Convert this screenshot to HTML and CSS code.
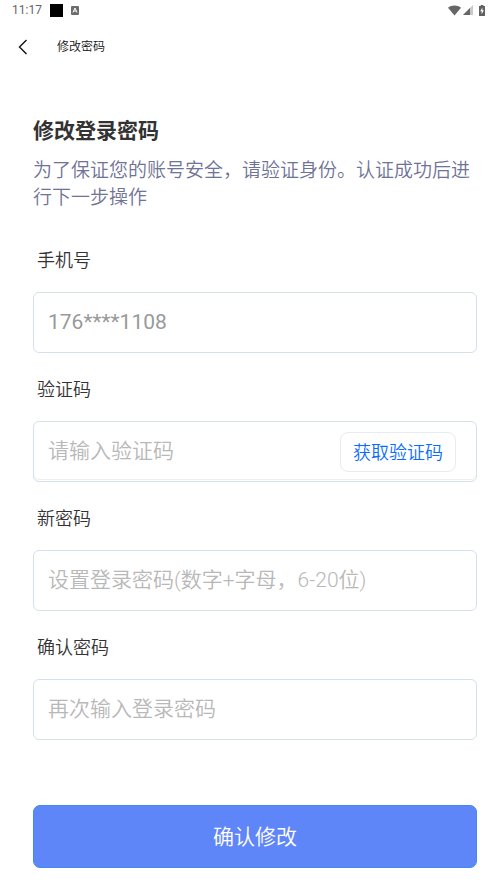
FILE: index.html
```html
<!DOCTYPE html>
<html lang="zh-CN">
<head>
<meta charset="utf-8">
<meta name="viewport" content="width=device-width, initial-scale=1">
<title>修改密码</title>
<link rel="stylesheet" href="styles.css">
</head>
<body>
<div class="status">
  <span class="clock">11:17</span>
  <span class="square"></span>
  <svg class="badge" width="8" height="9" viewBox="0 0 8 9" aria-hidden="true"><rect width="8" height="9" rx="1" fill="#6c6c6c"/><path d="M2 6.5 4 2 6 6.5M2.8 5h2.4" fill="none" stroke="#fff"/></svg>
  <span class="signals">
    <svg width="13" height="11" viewBox="0 0 13 11" aria-hidden="true"><path d="M0 2.8C3.6-.4 9.4-.4 13 2.8L6.5 10.6Z" fill="#666"/></svg>
    <svg width="10" height="10" viewBox="0 0 10 10" aria-hidden="true"><path d="M10 0V10H0Z" fill="#c8c8c8"/><path d="M7 3V10H0Z" fill="#666"/></svg>
    <svg class="battery" width="6" height="11" viewBox="0 0 6 11" aria-hidden="true"><path d="M0 1h1.7V0h2.6v1H6v10H0Z" fill="#606060"/><path d="M3.4 2.5 1.2 6.2h1.4v3L4.9 5.3H3.4Z" fill="#fff"/></svg>
  </span>
</div>
<header class="bar">
  <button class="back" type="button" aria-label="返回"><svg width="10" height="16" viewBox="0 0 10 16" aria-hidden="true"><path d="M8.5 1 1.5 8l7 7" fill="none" stroke="#111" stroke-width="1.4"/></svg></button>
  <span class="bar-title">修改密码</span>
</header>
<main class="page">
  <h1 class="title">修改登录密码</h1>
  <p class="intro">为了保证您的账号安全，请验证身份。认证成功后进行下一步操作</p>
  <form class="form">
    <div class="field">
      <label class="label" for="phone">手机号</label>
      <input class="box number" id="phone" type="text" value="176****1108" readonly>
    </div>
    <div class="field">
      <label class="label" for="code">验证码</label>
      <div class="box code-box">
        <input class="code-input" id="code" type="text" placeholder="请输入验证码">
        <button class="get-code" type="button">获取验证码</button>
      </div>
    </div>
    <div class="field">
      <label class="label" for="password">新密码</label>
      <input class="box" id="password" type="password" placeholder="设置登录密码(数字+字母，6-20位)">
    </div>
    <div class="field">
      <label class="label" for="confirm">确认密码</label>
      <input class="box" id="confirm" type="password" placeholder="再次输入登录密码">
    </div>
    <button class="submit" type="submit">确认修改</button>
  </form>
</main>
</body>
</html>
```
FILE: styles.css
```css
* {
  box-sizing: border-box;
}

body {
  margin: 0;
  background: #fff;
  color: #333;
  font-family: Roboto, "Noto Sans CJK SC", sans-serif;
  font-weight: 350;
}

input,
button {
  margin: 0;
  font-family: inherit;
  font-weight: inherit;
}

.status {
  display: flex;
  align-items: center;
  height: 20px;
  padding: 0 12px;
  color: #666;
}

.clock {
  font-size: 12px;
  font-weight: 400;
  line-height: 20px;
}

.square {
  width: 13px;
  height: 13px;
  margin: 0 8px;
  background: #000;
}

.signals {
  display: flex;
  align-items: center;
  gap: 2px;
  margin-left: auto;
}

.battery {
  margin-left: 4px;
}

.bar {
  display: flex;
  align-items: center;
  height: 53px;
  padding: 0 16px;
}

.back {
  display: flex;
  align-items: center;
  justify-content: center;
  width: 14px;
  height: 32px;
  padding: 0;
  border: 0;
  background: none;
}

.bar-title {
  margin-left: 27px;
  color: #111;
  font-size: 12px;
  line-height: 20px;
}

.page {
  padding: 42px 20px 17px 33px;
}

.title {
  margin: 0;
  font-size: 21px;
  line-height: 32px;
}

.intro {
  margin: 10px 0 38px;
  color: #6f7396;
  font-size: 19px;
  line-height: 27px;
}

.field {
  margin-bottom: 25px;
}

.label {
  display: block;
  margin-bottom: 19px;
  padding-left: 4px;
  font-size: 18px;
  line-height: 24px;
}

.box {
  display: block;
  width: 100%;
  height: 61px;
  padding: 0 14px 2px;
  border: 1px solid #d6dfec;
  border-radius: 6px;
  background: #fff;
  color: #999;
  font-size: 21px;
  outline: 0;
}

.number {
  font-weight: 400;
}

.code-box {
  display: flex;
  align-items: center;
  padding: 0 20px 0 14px;
  box-shadow: inset 0 -1px #fff, inset 0 -2px #eee;
}

.code-input {
  flex: 1;
  min-width: 0;
  padding: 0 0 2px;
  border: 0;
  background: none;
  color: #999;
  font-size: 21px;
  outline: 0;
}

input::placeholder {
  color: #b8b8b8;
  opacity: 1;
}

.get-code {
  height: 40px;
  padding: 0 12px 2px;
  border: 1px solid #e8ebef;
  border-radius: 8px;
  background: #fff;
  color: #0a6cff;
  font-size: 18px;
}

.submit {
  display: block;
  width: 100%;
  height: 63px;
  margin-top: 65px;
  padding-bottom: 4px;
  border: 1px solid #3f8cec;
  border-radius: 7px;
  background: #5f86f8;
  color: #fff;
  font-size: 21px;
}
```
